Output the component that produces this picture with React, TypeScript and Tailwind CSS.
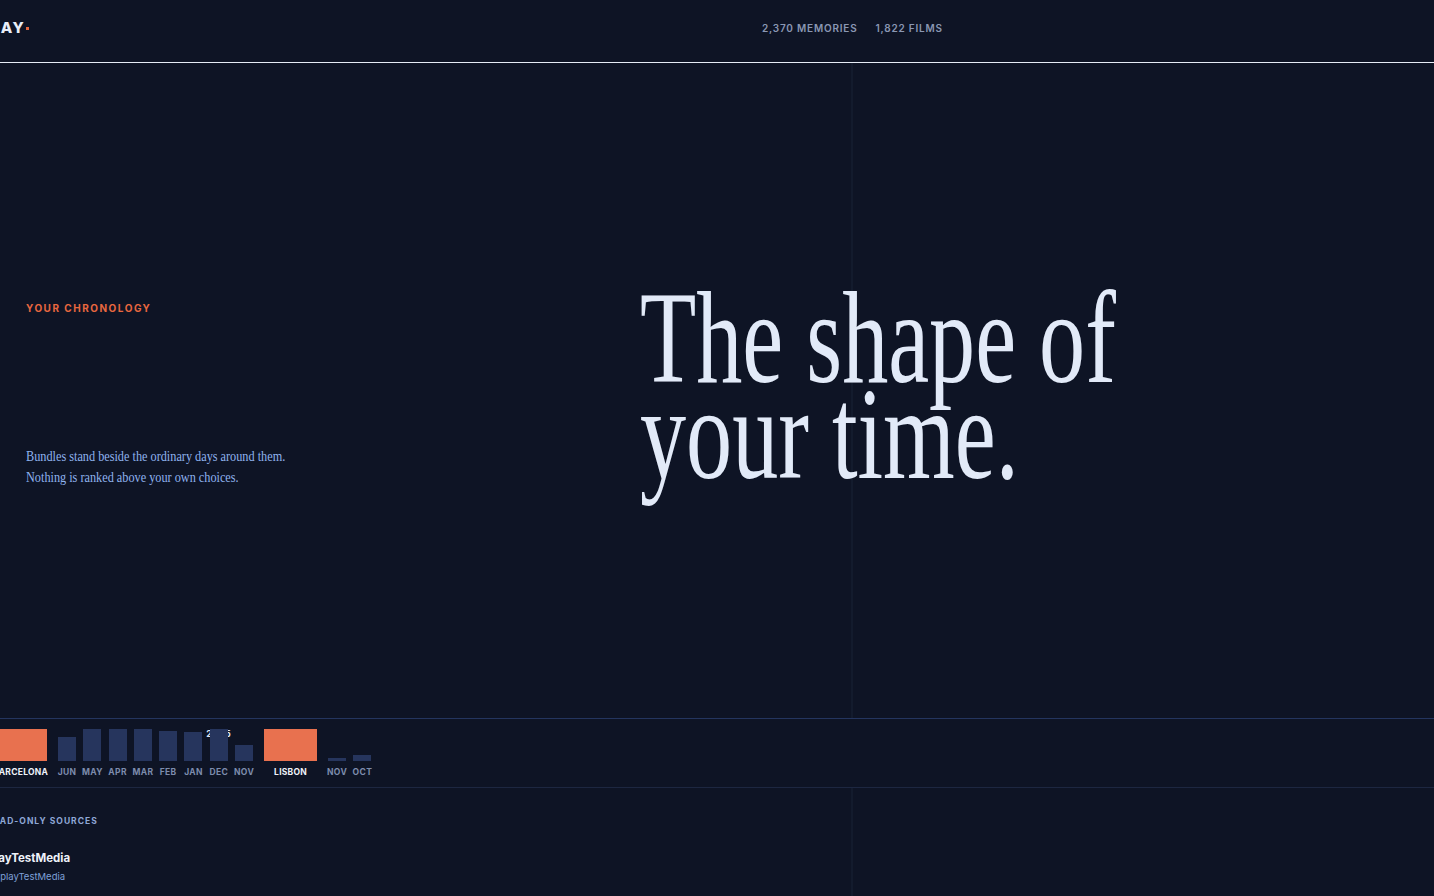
const sans = { fontFamily: 'Inter, "Liberation Sans", sans-serif' }
const serif = { fontFamily: '"Liberation Serif", "DejaVu Serif", serif' }

type Bar = { label: string; h: number; year?: string }

const firstMonths: Bar[] = [
  { label: 'JUN', h: 24 },
  { label: 'MAY', h: 32 },
  { label: 'APR', h: 32 },
  { label: 'MAR', h: 32 },
  { label: 'FEB', h: 30 },
  { label: 'JAN', h: 29 },
  { label: 'DEC', h: 32, year: '2025' },
  { label: 'NOV', h: 16 },
]

const laterMonths: Bar[] = [
  { label: 'NOV', h: 3 },
  { label: 'OCT', h: 6 },
]

function MonthBar({ bar }: { bar: Bar }) {
  return (
    <div className="relative flex flex-col items-center w-[18px]">
      {bar.year && (
        <span className="absolute top-0 text-[9px] leading-[10px] font-bold tracking-[0.05em] text-[#dfe6f5] whitespace-nowrap">
          {bar.year}
        </span>
      )}
      <div className="h-[32px] w-full flex items-end">
        <div className="relative z-10 w-full bg-[#26355d]" style={{ height: bar.h }} />
      </div>
      <span className="mt-[5px] text-[8.5px] leading-[12px] font-bold tracking-[0.04em] text-[#7d8cad] whitespace-nowrap">
        {bar.label}
      </span>
    </div>
  )
}

function Bundle({ label }: { label: string }) {
  return (
    <div className="flex flex-col items-center w-[53px]">
      <div className="h-[32px] w-full bg-[#e8714f]" />
      <span className="mt-[5px] text-[8.5px] leading-[12px] font-bold tracking-[0.03em] text-[#eef2fa] whitespace-nowrap">
        {label}
      </span>
    </div>
  )
}

export default function App() {
  return (
    <div className="relative w-[1434px] h-[896px] overflow-hidden bg-[#0e1425] flex flex-col" style={sans}>
      {/* faint centre rule */}
      <div className="absolute left-[851px] top-[63px] bottom-0 w-[2px] bg-[#131b2d]" />

      <header className="relative z-10 h-[63px] shrink-0 flex items-center pb-[6px] border-b border-[#e6ecf6] bg-[#0e1425]">
        <div className="w-[762px] shrink-0 flex items-center">
          <span className="-ml-[50px] text-[15px] font-extrabold tracking-[0.1em] text-[#e9eef8]">DISPLAY</span>
          <span className="ml-[1px] mt-[1px] w-[3px] h-[3px] bg-[#e8673f]" />
        </div>
        <div className="flex items-center gap-[18px] text-[10px] font-semibold tracking-[0.08em] text-[#8a97b3]">
          <span>2,370 MEMORIES</span>
          <span>1,822 FILMS</span>
        </div>
      </header>

      <section className="relative flex h-[655px] shrink-0">
        <div className="w-[640px] shrink-0 pl-[26px] pt-[238px]">
          <p className="text-[10px] leading-[15px] font-bold tracking-[0.15em] text-[#e8673f]">YOUR CHRONOLOGY</p>
          <div className="mt-[130px] origin-left scale-x-[0.875] text-[14px] leading-[21px] text-[#8fb2ee] whitespace-nowrap" style={serif}>
            <p>Bundles stand beside the ordinary days around them.</p>
            <p>Nothing is ranked above your own choices.</p>
          </div>
        </div>
        <div className="pt-[227px]">
          <h1
            className="origin-left scale-x-[0.698] text-[132px] leading-[96px] font-normal text-[#e2eaf8] whitespace-nowrap"
            style={serif}
          >
            The shape of
            <br />
            your time.
          </h1>
        </div>
      </section>

      <section className="relative z-10 h-[70px] shrink-0 border-y border-t-[#24355f] border-b-[#1d2741] bg-[#0e1425] pt-[10px]">
        <div className="-ml-[6px] flex items-start gap-[11px]">
          <Bundle label="BARCELONA" />
          <div className="flex items-start gap-[7.3px]">
            {firstMonths.map((b, i) => (
              <MonthBar key={i} bar={b} />
            ))}
          </div>
          <Bundle label="LISBON" />
          <div className="flex items-start gap-[7.3px]">
            {laterMonths.map((b, i) => (
              <MonthBar key={i} bar={b} />
            ))}
          </div>
        </div>
      </section>

      <section className="flex-1 pt-[27px]">
        <p className="-ml-[13px] text-[8.5px] leading-[12px] font-bold tracking-[0.12em] text-[#8ea7d6]">READ-ONLY SOURCES</p>
        <p className="-ml-[30px] mt-[23px] text-[11.5px] leading-[16px] font-bold text-[#eef2fa]">DisplayTestMedia</p>
        <p className="-ml-[13px] mt-[4px] text-[9.5px] leading-[14px] text-[#7fa0d8]">displayTestMedia</p>
      </section>
    </div>
  )
}
